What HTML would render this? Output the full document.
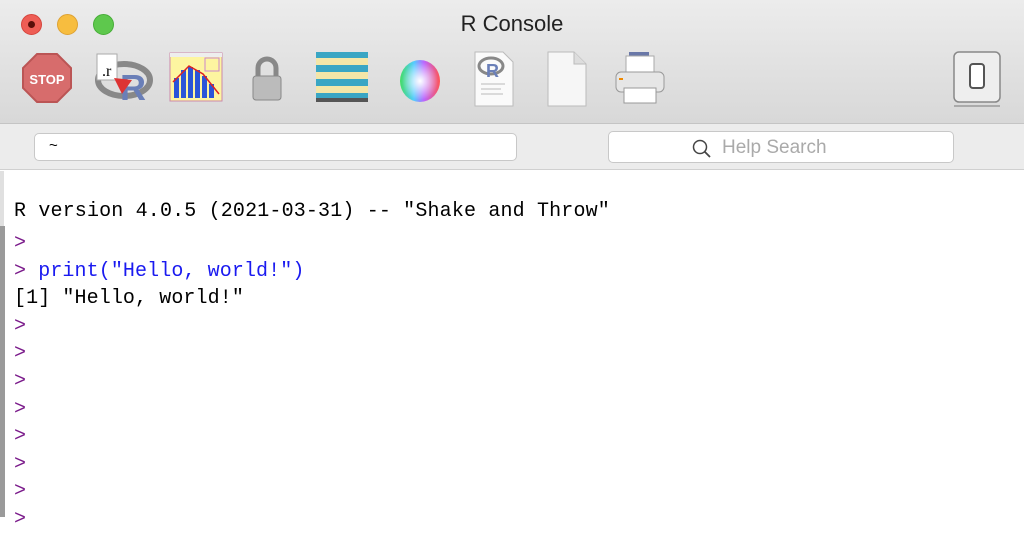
<!DOCTYPE html><html><head><style>
*{margin:0;padding:0;box-sizing:border-box}
body{width:1024px;height:517px;overflow:hidden;background:#fff;font-family:"Liberation Sans",sans-serif;position:relative}
.top{position:absolute;left:0;top:0;width:1024px;height:124px;background:linear-gradient(#ececec,#d8d8d8);border-bottom:1px solid #c4c4c4}
.bar2{position:absolute;left:0;top:124px;width:1024px;height:46px;background:#ececec;border-bottom:1px solid #d0d0d0}
.dot{position:absolute;top:14px;width:21px;height:21px;border-radius:50%}
.title{position:absolute;top:11px;left:0;width:1024px;text-align:center;font-size:22px;color:#222;padding-left:0}
.in{position:absolute;background:#fff;border:1px solid #c8c8c8;border-radius:5px}
.con{position:absolute;left:14px;font-family:"Liberation Mono",monospace;font-size:20px;letter-spacing:0.1px;line-height:27.6px;white-space:pre;color:#000}
.p{color:#7a1a8a}.b{color:#1a1af0}
.ic{position:absolute}
</style></head><body>
<div class="top"></div>
<div class="dot" style="left:21px;background:#ee5d55;border:1px solid #d5453d"><div style="width:7px;height:7px;background:#5a0f0a;border-radius:50%;margin:6px"></div></div>
<div class="dot" style="left:57px;background:#f7bd3f;border:1px solid #dea233"></div>
<div class="dot" style="left:93px;background:#5ec84d;border:1px solid #47ad38"></div>
<div class="title">R Console</div>
<svg class="ic" style="left:20px;top:52px" width="58" height="54"><polygon points="17,2 37,2 51,16 51,36 37,50 17,50 3,36 3,16" fill="#d76c6c" stroke="#b55" stroke-width="2"/><text x="27" y="32" text-anchor="middle" fill="#fff" font-size="13" font-weight="bold" font-family="Liberation Sans">STOP</text></svg>
<svg class="ic" style="left:92px;top:50px" width="62" height="54"><ellipse cx="32" cy="30" rx="26" ry="16" fill="none" stroke="#888" stroke-width="6"/><text x="28" y="50" fill="#6a7fb8" font-size="36" font-weight="bold" font-family="Liberation Sans">R</text><rect x="5" y="4" width="20" height="26" fill="#fff" stroke="#aaa"/><text x="10" y="26" font-size="16" font-family="Liberation Serif">.r</text><polygon points="22,28 40,30 30,44" fill="#d33"/></svg>
<svg class="ic" style="left:169px;top:52px" width="54" height="50"><rect x="1" y="1" width="52" height="48" fill="#fdf5a0" stroke="#c8a"/><rect x="1" y="1" width="52" height="4" fill="#eee"/><g fill="#2a55d8"><rect x="5" y="26" width="5" height="20"/><rect x="12" y="18" width="5" height="28"/><rect x="19" y="15" width="5" height="31"/><rect x="26" y="18" width="5" height="28"/><rect x="33" y="24" width="5" height="22"/><rect x="40" y="32" width="5" height="14"/></g><polyline points="4,30 20,14 34,22 50,42" fill="none" stroke="#d22" stroke-width="1.5"/><rect x="36" y="6" width="14" height="13" fill="none" stroke="#c8c"/></svg>
<svg class="ic" style="left:248px;top:54px" width="38" height="50"><path d="M10 22 V14 a9 9 0 0 1 18 0 V22" fill="none" stroke="#888" stroke-width="5"/><rect x="5" y="22" width="28" height="24" rx="3" fill="#bbb" stroke="#888"/></svg>
<svg class="ic" style="left:316px;top:52px" width="54" height="50"><rect width="52" height="50" fill="#3aa6c4"/><g fill="#f4e6a8"><rect y="6" width="52" height="7"/><rect y="20" width="52" height="7"/><rect y="34" width="52" height="7"/></g><rect x="0" y="46" width="52" height="4" fill="#555"/></svg>
<svg class="ic" style="left:397px;top:58px" width="46" height="46"><defs><radialGradient id="w"><stop offset="0" stop-color="#fff"/><stop offset="1" stop-color="#fff" stop-opacity="0"/></radialGradient><linearGradient id="c" x1="0" x2="1"><stop offset="0" stop-color="#4d6"/><stop offset=".35" stop-color="#5cf"/><stop offset=".6" stop-color="#b6f"/><stop offset="1" stop-color="#f55"/></linearGradient></defs><ellipse cx="23" cy="23" rx="20" ry="21" fill="url(#c)"/><ellipse cx="23" cy="23" rx="18" ry="19" fill="url(#w)"/></svg>
<svg class="ic" style="left:471px;top:50px" width="46" height="58"><path d="M4 2 H32 L42 12 V56 H4 Z" fill="#fafafa" stroke="#bbb"/><ellipse cx="20" cy="16" rx="12" ry="8" fill="none" stroke="#888" stroke-width="3"/><text x="15" y="27" fill="#6a7fb8" font-size="18" font-weight="bold" font-family="Liberation Sans">R</text><g stroke="#bbb"><line x1="10" y1="34" x2="34" y2="34"/><line x1="10" y1="39" x2="30" y2="39"/><line x1="10" y1="44" x2="32" y2="44"/></g></svg>
<svg class="ic" style="left:544px;top:50px" width="46" height="58"><path d="M4 2 H30 L42 14 V56 H4 Z" fill="#f6f6f6" stroke="#bbb"/><path d="M30 2 V14 H42" fill="#ddd" stroke="#bbb"/></svg>
<svg class="ic" style="left:614px;top:50px" width="54" height="56"><rect x="15" y="2" width="20" height="6" fill="#6a78a8"/><rect x="12" y="6" width="28" height="22" fill="#fff" stroke="#aaa"/><rect x="2" y="22" width="48" height="20" rx="5" fill="#e6e6e6" stroke="#999"/><rect x="10" y="38" width="32" height="15" fill="#fff" stroke="#999"/><rect x="5" y="28" width="4" height="2" fill="#e80"/></svg>
<svg class="ic" style="left:952px;top:50px" width="50" height="58"><rect x="2" y="2" width="46" height="50" rx="5" fill="#eee" stroke="#888" stroke-width="1.5"/><rect x="18" y="14" width="14" height="24" rx="3" fill="#fff" stroke="#555" stroke-width="2"/><line x1="2" y1="56" x2="48" y2="56" stroke="#aaa" stroke-width="2"/></svg>
<div class="bar2"></div>
<div class="in" style="left:34px;top:133px;width:483px;height:28px"><span style="position:absolute;left:14px;top:3px;font-size:15px">~</span></div>
<div class="in" style="left:608px;top:131px;width:346px;height:32px"><svg style="position:absolute;left:82px;top:6px" width="22" height="22"><circle cx="9" cy="9" r="6.5" fill="none" stroke="#444" stroke-width="1.5"/><line x1="13.5" y1="13.5" x2="19" y2="19" stroke="#444" stroke-width="1.8"/></svg><span style="position:absolute;left:113px;top:5px;font-size:19px;color:#aaa">Help Search</span></div>
<div style="position:absolute;left:0;top:171px;width:4px;height:55px;background:#e0e0e0"></div>
<div style="position:absolute;left:0;top:226px;width:5px;height:291px;background:#9a9a9a"></div>
<div class="con" style="top:198px;letter-spacing:0.16px">R version 4.0.5 (2021-03-31) -- "Shake and Throw"</div>
<div class="con" style="top:230px"><span class="p">&gt;</span>
<span class="p">&gt;</span> <span class="b">print("Hello, world!")</span>
[1] "Hello, world!"
<span class="p">&gt;
&gt;
&gt;
&gt;
&gt;
&gt;
&gt;
&gt;</span></div>
</body></html>
